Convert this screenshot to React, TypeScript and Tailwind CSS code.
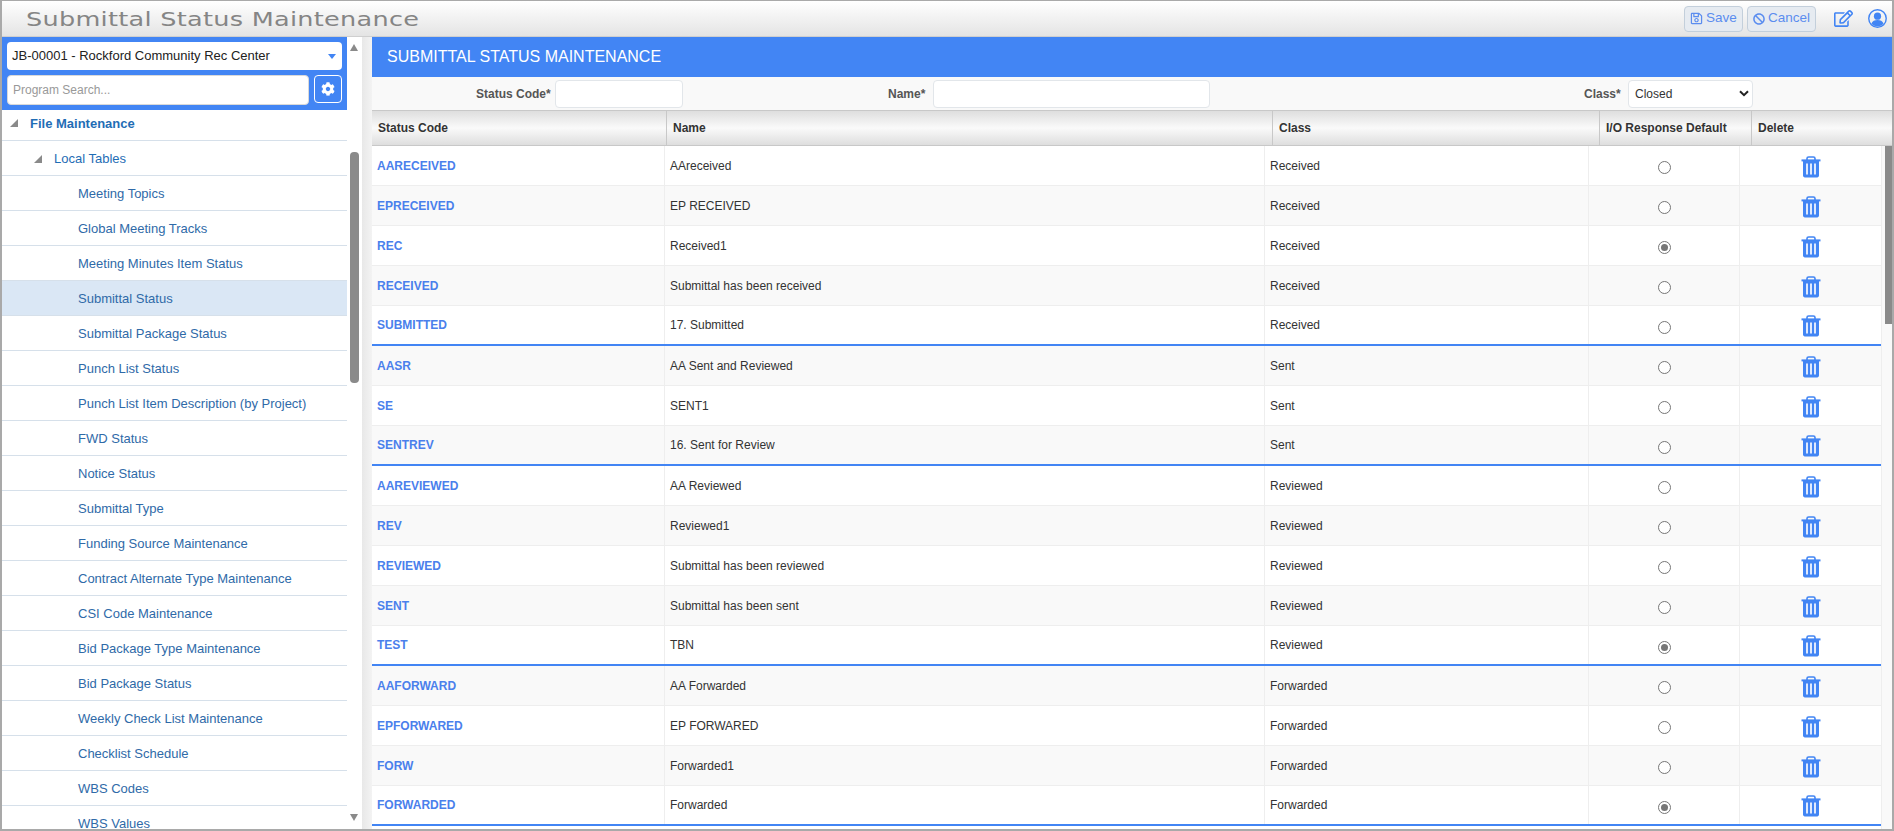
import { FaBan, FaCog, FaRegEdit, FaRegSave } from "react-icons/fa";

const font = "font-['Liberation_Sans',Arial,sans-serif]";

const navItems = [
  "Meeting Topics",
  "Global Meeting Tracks",
  "Meeting Minutes Item Status",
  "Submittal Status",
  "Submittal Package Status",
  "Punch List Status",
  "Punch List Item Description (by Project)",
  "FWD Status",
  "Notice Status",
  "Submittal Type",
  "Funding Source Maintenance",
  "Contract Alternate Type Maintenance",
  "CSI Code Maintenance",
  "Bid Package Type Maintenance",
  "Bid Package Status",
  "Weekly Check List Maintenance",
  "Checklist Schedule",
  "WBS Codes",
  "WBS Values",
];

type Row = { code: string; name: string; cls: string; on?: boolean; last?: boolean };

const rows: Row[] = [
  { code: "AARECEIVED", name: "AAreceived", cls: "Received" },
  { code: "EPRECEIVED", name: "EP RECEIVED", cls: "Received" },
  { code: "REC", name: "Received1", cls: "Received", on: true },
  { code: "RECEIVED", name: "Submittal has been received", cls: "Received" },
  { code: "SUBMITTED", name: "17. Submitted", cls: "Received", last: true },
  { code: "AASR", name: "AA Sent and Reviewed", cls: "Sent" },
  { code: "SE", name: "SENT1", cls: "Sent" },
  { code: "SENTREV", name: "16. Sent for Review", cls: "Sent", last: true },
  { code: "AAREVIEWED", name: "AA Reviewed", cls: "Reviewed" },
  { code: "REV", name: "Reviewed1", cls: "Reviewed" },
  { code: "REVIEWED", name: "Submittal has been reviewed", cls: "Reviewed" },
  { code: "SENT", name: "Submittal has been sent", cls: "Reviewed" },
  { code: "TEST", name: "TBN", cls: "Reviewed", on: true, last: true },
  { code: "AAFORWARD", name: "AA Forwarded", cls: "Forwarded" },
  { code: "EPFORWARED", name: "EP FORWARED", cls: "Forwarded" },
  { code: "FORW", name: "Forwarded1", cls: "Forwarded" },
  { code: "FORWARDED", name: "Forwarded", cls: "Forwarded", on: true, last: true },
];

function TrashIcon() {
  return (
    <svg width="20" height="22" viewBox="0 0 20 22" className="mt-[2px]" aria-hidden="true">
      <path d="M6 4V2.6C6 1.7 6.7 1 7.6 1h4.8c.9 0 1.6.7 1.6 1.6V4" fill="none" stroke="#4285f4" strokeWidth="1.6" />
      <rect x="0.5" y="3.4" width="19" height="2" fill="#4285f4" />
      <path d="M2 5h16v14.6c0 1.1-.8 1.9-1.8 1.9H3.8c-1 0-1.8-.8-1.8-1.9z" fill="#4285f4" />
      <rect x="5" y="7.5" width="2" height="11" fill="#dfe9fd" />
      <rect x="9" y="7.5" width="2" height="11" fill="#dfe9fd" />
      <rect x="13" y="7.5" width="2" height="11" fill="#dfe9fd" />
    </svg>
  );
}

function UserIcon() {
  return (
    <svg width="19" height="19" viewBox="0 0 20 20" className="ml-[15px]" aria-hidden="true">
      <circle cx="10" cy="10" r="9.2" fill="none" stroke="#4285f4" strokeWidth="1.5" />
      <circle cx="10" cy="7.6" r="3.8" fill="#4285f4" />
      <path d="M3.6 15.4c1-2.8 3.4-3.9 6.4-3.9s5.4 1.1 6.4 3.9A8.2 8.2 0 0 1 10 18.2a8.2 8.2 0 0 1-6.4-2.8z" fill="#4285f4" />
    </svg>
  );
}

function Radio({ on }: { on?: boolean }) {
  return (
    <span className="mt-[4px] flex h-[13px] w-[13px] items-center justify-center rounded-full border border-[#767676] bg-white">
      {on && <span className="h-[7px] w-[7px] rounded-full bg-[#767676]" />}
    </span>
  );
}

function Sidebar() {
  return (
    <aside className="flex w-[345px] shrink-0 flex-col overflow-hidden">
      <div className="flex h-[73px] shrink-0 flex-col gap-[5px] bg-[#4285f4] px-[5px] pt-[5px]">
        <div className="flex h-[28px] items-center justify-between rounded-[4px] bg-white pl-[5px] pr-[6px] text-[13px] text-[#222]">
          <span>JB-00001 - Rockford Community Rec Center</span>
          <span className="h-0 w-0 border-x-[4px] border-t-[5px] border-x-transparent border-t-[#4285f4]" />
        </div>
        <div className="flex gap-[5px]">
          <div className="flex h-[30px] w-[302px] items-center rounded-[4px] border border-[#d9d9d9] bg-white px-[5px] text-[12px] text-[#999]">
            Program Search...
          </div>
          <div className="flex h-[28px] w-[28px] items-center justify-center rounded-[4px] border border-white bg-[#4285f4] text-white">
            <FaCog size={14} />
          </div>
        </div>
      </div>
      <div className="min-h-0 flex-1 overflow-hidden">
        <div className="relative flex h-[31px] items-center border-b border-[#d6e0ea] pb-[3px] pl-[28px] text-[13px] font-bold text-[#1f6db5]">
          <span className="absolute left-[8px] top-[9px] h-0 w-0 border-b-[8px] border-l-[8px] border-b-[#8a8a8a] border-l-transparent" />
          File Maintenance
        </div>
        <div className="relative flex h-[35px] items-center border-b border-[#d6e0ea] pl-[52px] pt-[1px] text-[13px] text-[#1f6db5]">
          <span className="absolute left-[32px] top-[14px] h-0 w-0 border-b-[8px] border-l-[8px] border-b-[#8a8a8a] border-l-transparent" />
          Local Tables
        </div>
        {navItems.map((item) => (
          <div
            key={item}
            className={`flex h-[35px] items-center border-b border-[#d6e0ea] pl-[76px] pt-[1px] text-[13px] text-[#2f6aa8] ${
              item === "Submittal Status" ? "bg-[#dae7f5]" : ""
            }`}
          >
            {item}
          </div>
        ))}
      </div>
    </aside>
  );
}

function SideScroll() {
  return (
    <div className="relative w-[15px] shrink-0 bg-white">
      <span className="absolute left-[3px] top-[7px] h-0 w-0 border-x-[4.5px] border-b-[7px] border-x-transparent border-b-[#8a8a8a]" />
      <span className="absolute left-[3px] top-[115px] h-[231px] w-[9px] rounded-[4px] bg-[#8a8a8a]" />
      <span className="absolute bottom-[8px] left-[3px] h-0 w-0 border-x-[4.5px] border-t-[7px] border-x-transparent border-t-[#8a8a8a]" />
    </div>
  );
}

function Main() {
  const headCell = "flex items-center border-r border-[#c8c8c8] px-[6px] text-[12px] font-bold text-[#333]";
  return (
    <main className="flex min-w-0 flex-1 flex-col overflow-hidden">
      <div className="flex h-[40px] shrink-0 items-center bg-[#4285f4] pl-[15px] text-[16px] text-white">
        SUBMITTAL STATUS MAINTENANCE
      </div>
      <div className="flex h-[33px] shrink-0 items-center bg-[#f9f9f9] text-[12px] font-bold text-[#555]">
        <span className="ml-[104px] w-[75px] whitespace-nowrap">Status Code*</span>
        <span className="ml-[4px] h-[28px] w-[128px] rounded-[4px] border border-[#e2e6ea] bg-white" />
        <span className="ml-[205px] w-[40px]">Name*</span>
        <span className="ml-[5px] h-[28px] w-[277px] rounded-[4px] border border-[#e2e6ea] bg-white" />
        <span className="ml-[374px] w-[37px]">Class*</span>
        <span className="ml-[7px] flex h-[28px] w-[125px] items-center justify-between rounded-[4px] border border-[#e2e6ea] bg-white pl-[6px] pr-[3px] text-[12px] font-normal text-[#333]">
          Closed
          <svg width="10" height="7" viewBox="0 0 10 7" aria-hidden="true">
            <path d="M1 1.2l4 4 4-4" fill="none" stroke="#222" strokeWidth="2" />
          </svg>
        </span>
      </div>
      <div className="grid h-[36px] shrink-0 grid-cols-[295px_606px_327px_152px_1fr] border-y border-[#c8c8c8] bg-gradient-to-b from-[#dedede] via-[#fafafa] to-[#dedede]">
        <div className={headCell}>Status Code</div>
        <div className={headCell}>Name</div>
        <div className={headCell}>Class</div>
        <div className={headCell}>I/O Response Default</div>
        <div className={`${headCell} border-r-0`}>Delete</div>
      </div>
      <div className="flex min-h-0 flex-1">
        <div className="w-[1509px] shrink-0">
          {rows.map((r, i) => (
            <div
              key={r.code}
              className={`grid h-[40px] grid-cols-[293px_600px_324px_151px_1fr] border-b text-[12px] text-[#333] ${
                r.last ? "border-b-[2px] border-b-[#4285f4]" : "border-b-[#eeeeee]"
              } ${i % 2 === 1 ? "bg-[#f9f9f9]" : "bg-white"}`}
            >
              <div className="flex items-center border-r border-[#eeeeee] pl-[5px] font-bold text-[#4a80ec]">{r.code}</div>
              <div className="flex items-center border-r border-[#eeeeee] pl-[5px]">{r.name}</div>
              <div className="flex items-center border-r border-[#eeeeee] pl-[5px]">{r.cls}</div>
              <div className="flex items-center justify-center border-r border-[#eeeeee]">
                <Radio on={r.on} />
              </div>
              <div className="flex items-center justify-center">
                <TrashIcon />
              </div>
            </div>
          ))}
        </div>
        <div className="relative min-w-0 flex-1 border-l border-[#eeeeee] bg-[#f9f9f9]">
          <span className="absolute left-[3px] top-0 h-[178px] w-[8px] bg-[#8a8a8a]" />
        </div>
      </div>
    </main>
  );
}

export default function App() {
  return (
    <div className={`${font} flex h-[831px] w-[1894px] flex-col overflow-hidden border-2 border-t-[1px] border-[#a9a9a9] bg-white`}>
      <header className="flex h-[36px] shrink-0 items-center justify-between border-b border-[#cfcfcf] bg-gradient-to-b from-white to-[#e4e4e4]">
        <h1 className="ml-[24px] mt-[1px] origin-left scale-x-[1.345] font-['DejaVu_Sans',sans-serif] text-[19px] font-normal tracking-[0.2px] text-[#858585]">
          Submittal Status Maintenance
        </h1>
        <div className="mr-[5px] flex items-center">
          <button className="flex h-[26px] w-[59px] items-center justify-center gap-[3px] rounded-[4px] border border-[#c3cfdb] bg-[#e6ebf1] text-[13.5px] text-[#5b8def]">
            <FaRegSave size={13} />
            Save
          </button>
          <button className="ml-[4px] flex h-[26px] w-[69px] items-center justify-center gap-[3px] rounded-[4px] border border-[#c3cfdb] bg-[#e6ebf1] text-[13.5px] text-[#5b8def]">
            <FaBan size={12} />
            Cancel
          </button>
          <FaRegEdit size={19} className="ml-[18px] text-[#4285f4]" />
          <UserIcon />
        </div>
      </header>
      <div className="flex min-h-0 flex-1">
        <Sidebar />
        <SideScroll />
        <div className="w-[10px] shrink-0 bg-gradient-to-r from-[#e8e8e8] to-[#f3f3f3]" />
        <Main />
      </div>
    </div>
  );
}
